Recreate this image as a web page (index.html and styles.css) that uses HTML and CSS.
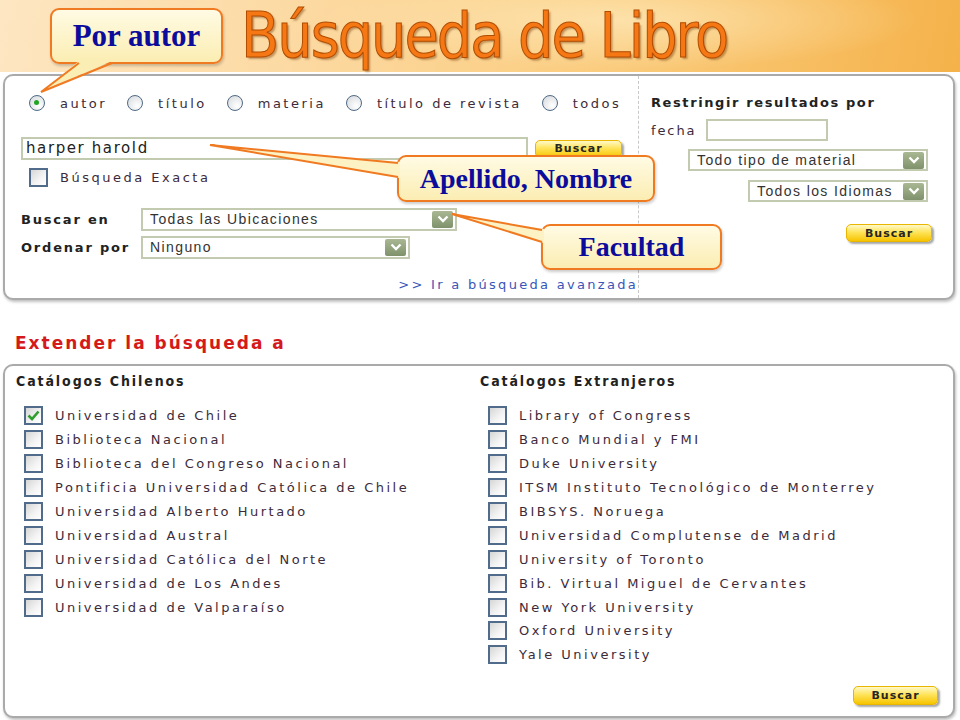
FILE: index.html
```html
<!DOCTYPE html>
<html>
<head>
  <title>Búsqueda de Libro</title>
  <link rel="stylesheet" href="styles.css">
</head>
<body>
  <header class="banner">
    <h1 class="title">Búsqueda de Libro</h1>
  </header>

  <main class="page">
    <section class="panel search-panel">
      <div class="search-main">
        <div class="radio-row">
          <label class="radio-item"><span class="radio checked"></span>autor</label>
          <label class="radio-item"><span class="radio"></span>título</label>
          <label class="radio-item"><span class="radio"></span>materia</label>
          <label class="radio-item"><span class="radio"></span>título de revista</label>
          <label class="radio-item"><span class="radio"></span>todos</label>
        </div>

        <div class="search-row">
          <div class="text-input wide">harper harold</div>
          <button class="button">Buscar</button>
        </div>

        <label class="check-item exact"><span class="check"></span>Búsqueda Exacta</label>

        <div class="options">
          <span class="option-label">Buscar en</span>
          <div class="select" style="width: 316px;"><span>Todas las Ubicaciones</span><span class="arrow"><svg width="12" height="8" viewBox="0 0 12 8"><path d="M1.5 1.5 L6 6 L10.5 1.5" fill="none" stroke="#fff" stroke-width="2.4"/></svg></span></div>
          <span class="option-label">Ordenar por</span>
          <div class="select" style="width: 269px;"><span>Ninguno</span><span class="arrow"><svg width="12" height="8" viewBox="0 0 12 8"><path d="M1.5 1.5 L6 6 L10.5 1.5" fill="none" stroke="#fff" stroke-width="2.4"/></svg></span></div>
        </div>

        <div class="advanced"><a href="#">&gt;&gt; Ir a búsqueda avanzada</a></div>
      </div>

      <div class="search-side">
        <h3 class="side-title">Restringir resultados por</h3>
        <div class="date-row">
          <span>fecha</span>
          <div class="text-input date"></div>
        </div>
        <div class="side-selects">
          <div class="select" style="width: 240px;"><span>Todo tipo de material</span><span class="arrow"><svg width="12" height="8" viewBox="0 0 12 8"><path d="M1.5 1.5 L6 6 L10.5 1.5" fill="none" stroke="#fff" stroke-width="2.4"/></svg></span></div>
          <div class="select" style="width: 180px;"><span>Todos los Idiomas</span><span class="arrow"><svg width="12" height="8" viewBox="0 0 12 8"><path d="M1.5 1.5 L6 6 L10.5 1.5" fill="none" stroke="#fff" stroke-width="2.4"/></svg></span></div>
          <button class="button side-button">Buscar</button>
        </div>
      </div>
    </section>

    <h2 class="extend-title">Extender la búsqueda a</h2>

    <section class="panel catalog-panel">
      <div class="catalog-cols">
        <div class="catalog">
          <h4 class="catalog-title">Catálogos Chilenos</h4>
          <label class="check-item"><span class="check"><svg width="13" height="11" viewBox="0 0 13 11"><path d="M1.5 5.5 L5 9 L11.5 1.5" fill="none" stroke="#2f9e2f" stroke-width="2.6"/></svg></span>Universidad de Chile</label>
          <label class="check-item"><span class="check"></span>Biblioteca Nacional</label>
          <label class="check-item"><span class="check"></span>Biblioteca del Congreso Nacional</label>
          <label class="check-item"><span class="check"></span>Pontificia Universidad Católica de Chile</label>
          <label class="check-item"><span class="check"></span>Universidad Alberto Hurtado</label>
          <label class="check-item"><span class="check"></span>Universidad Austral</label>
          <label class="check-item"><span class="check"></span>Universidad Católica del Norte</label>
          <label class="check-item"><span class="check"></span>Universidad de Los Andes</label>
          <label class="check-item"><span class="check"></span>Universidad de Valparaíso</label>
        </div>
        <div class="catalog">
          <h4 class="catalog-title">Catálogos Extranjeros</h4>
          <label class="check-item"><span class="check"></span>Library of Congress</label>
          <label class="check-item"><span class="check"></span>Banco Mundial y FMI</label>
          <label class="check-item"><span class="check"></span>Duke University</label>
          <label class="check-item"><span class="check"></span>ITSM Instituto Tecnológico de Monterrey</label>
          <label class="check-item"><span class="check"></span>BIBSYS. Noruega</label>
          <label class="check-item"><span class="check"></span>Universidad Complutense de Madrid</label>
          <label class="check-item"><span class="check"></span>University of Toronto</label>
          <label class="check-item"><span class="check"></span>Bib. Virtual Miguel de Cervantes</label>
          <label class="check-item"><span class="check"></span>New York University</label>
          <label class="check-item"><span class="check"></span>Oxford University</label>
          <label class="check-item"><span class="check"></span>Yale University</label>
        </div>
      </div>
      <div class="catalog-foot">
        <button class="button">Buscar</button>
      </div>
    </section>
  </main>

  <!-- callouts drawn over the screenshot -->
  <div class="callout callout-autor">Por autor</div>
  <div class="callout callout-name">Apellido, Nombre</div>
  <div class="callout callout-faculty">Facultad</div>

  <svg class="tails" width="960" height="720" viewBox="0 0 960 720">
    <polygon points="79,61 41,92 112,61" fill="#fbeeb4"/>
    <polyline points="79,63 41,92 112,63" fill="none" stroke="#f07a22" stroke-width="2"/>
    <polygon points="400,162 210,145 400,178" fill="#fcf2c4"/>
    <polyline points="398,163 210,145 398,177" fill="none" stroke="#f07a22" stroke-width="2"/>
    <polygon points="544,229 452,214 544,243" fill="#fcf2c4"/>
    <polyline points="542,230 452,214 542,242" fill="none" stroke="#f07a22" stroke-width="2"/>
  </svg>
</body>
</html>
```

FILE: styles.css
```css
* {
  box-sizing: border-box;
}
body {
  margin: 0;
  width: 960px;
  height: 720px;
  position: relative;
  overflow: hidden;
  background: #fff;
  font-family: "DejaVu Sans", Verdana, sans-serif;
  font-size: 13px;
  color: #3d2b3a;
}

/* orange slide header */
.banner {
  height: 72px;
  padding-left: 241px;
  background:
    radial-gradient(ellipse 300px 50px at 620px 20px, rgba(255,240,200,.6), rgba(255,240,200,0)),
    linear-gradient(100deg, #fde6c2 0%, #fcd89e 35%, #facb7c 65%, #f5b24a 100%);
}
.title {
  display: inline-block;
  margin: 0;
  padding-right: 4px;
  font-family: "Liberation Sans Narrow", "DejaVu Sans Condensed", "Liberation Sans", sans-serif;
  font-size: 62px;
  font-weight: normal;
  line-height: 72px;
  letter-spacing: -2px;
  color: #f67814;
  -webkit-text-stroke: 1px #b24c00;
  text-shadow: 2px 2px 2px rgba(120,60,10,.45);
}

.page {
  padding: 2px 5px 0 3px;
}
.panel {
  background: #fff;
  border: 2px solid #aaa;
  border-radius: 10px;
  box-shadow: 1px 2px 3px rgba(0,0,0,.25);
}

/* top search panel */
.search-panel {
  display: flex;
  height: 226px;
}
.search-main {
  width: 633px;
  padding: 19px 0 0 16px;
}
.radio-row {
  display: flex;
  align-items: center;
  gap: 20px;
  margin-left: 8px;
  height: 16px;
}
.radio-item {
  display: flex;
  align-items: center;
  gap: 15px;
  letter-spacing: 2.5px;
}
.radio {
  position: relative;
  width: 16px;
  height: 16px;
  border-radius: 50%;
  border: 1.5px solid #4f6984;
  background: radial-gradient(circle at 65% 70%, #fff, #d3d7db);
}
.radio.checked::after {
  content: "";
  position: absolute;
  left: 4px;
  top: 4px;
  width: 5px;
  height: 5px;
  border-radius: 50%;
  background: #22a524;
}

.search-row {
  display: flex;
  align-items: center;
  gap: 7px;
  margin-top: 26px;
}
.text-input {
  height: 23px;
  border: 2px solid #c2caaf;
  background: #fff;
}
.text-input.wide {
  width: 507px;
  padding-left: 3px;
  font-size: 15px;
  line-height: 19px;
  letter-spacing: 1.6px;
  color: #222;
}
.text-input.date {
  width: 122px;
  height: 22px;
}

.button {
  width: 87px;
  height: 18px;
  padding: 0;
  border: 1px solid #e8b600;
  border-radius: 5px;
  background: linear-gradient(#fff9c8, #ffe45a 45%, #f6c400);
  box-shadow: 2px 2px 2px rgba(0,0,0,.35);
  font-family: "DejaVu Sans", Verdana, sans-serif;
  font-size: 11px;
  font-weight: bold;
  letter-spacing: 1px;
  color: #262626;
  cursor: pointer;
}

.check-item {
  display: flex;
  align-items: center;
  gap: 12px;
  height: 23.9px;
  letter-spacing: 2.5px;
}
.check {
  display: flex;
  align-items: center;
  justify-content: center;
  width: 19px;
  height: 19px;
  flex: none;
  border: 2px solid #516c8a;
  background: linear-gradient(135deg, #d6d6d6, #f4f4f4 60%, #fff);
}
.exact {
  margin: 6px 0 0 8px;
}

.options {
  display: grid;
  grid-template-columns: 120px auto;
  grid-auto-rows: 23px;
  row-gap: 5px;
  align-items: center;
  margin-top: 18px;
}
.option-label {
  font-weight: bold;
  letter-spacing: 1.8px;
  color: #222;
}
.select {
  display: flex;
  align-items: center;
  justify-content: space-between;
  height: 23px;
  padding: 0 2px 0 7px;
  border: 2px solid #c2caaf;
  background: #fff;
  font-family: "Liberation Sans", Arial, sans-serif;
  font-size: 14px;
  letter-spacing: 1.4px;
  color: #333;
}
.arrow {
  display: flex;
  align-items: center;
  justify-content: center;
  width: 21px;
  height: 17px;
  border-radius: 2px;
  background: linear-gradient(#a9b893, #7f926b);
}

.advanced {
  margin-top: 18px;
  text-align: right;
}
.advanced a {
  color: #3956b8;
  text-decoration: none;
  letter-spacing: 2.3px;
}

.search-side {
  flex: 1;
  padding: 19px 25px 0 12px;
  border-left: 1px dashed #c8c8c8;
}
.side-title {
  margin: 0;
  height: 16px;
  font-size: 13px;
  line-height: 16px;
  letter-spacing: 1.6px;
  color: #222;
}
.date-row {
  display: flex;
  align-items: center;
  gap: 10px;
  margin-top: 8px;
  letter-spacing: 1.9px;
}
.side-selects {
  display: flex;
  flex-direction: column;
  align-items: flex-end;
  gap: 9px;
  margin-top: 8px;
}
.side-selects .select {
  height: 22px;
}
.side-button {
  width: 86px;
  margin: 13px -4px 0 0;
}

/* catalogs */
.extend-title {
  margin: 33px 0 11px 12px;
  font-family: "DejaVu Sans", Verdana, sans-serif;
  font-size: 17px;
  line-height: 20px;
  letter-spacing: 2px;
  color: #d41a1a;
}
.catalog-panel {
  display: flex;
  flex-direction: column;
  height: 354px;
}
.catalog-cols {
  display: grid;
  grid-template-columns: 464px 1fr;
  padding: 7px 0 0 11px;
}
.catalog-title {
  margin: 0 0 15px;
  font-family: "DejaVu Sans Condensed", "DejaVu Sans", sans-serif;
  font-size: 14px;
  line-height: 16px;
  letter-spacing: 1.9px;
  color: #222;
}
.catalog .check {
  margin-left: 8px;
}
.catalog-foot {
  display: flex;
  justify-content: flex-end;
  margin-top: auto;
  padding: 0 15px 11px 0;
}
.catalog-foot .button {
  width: 85px;
  height: 19px;
}

/* yellow callouts */
.callout {
  position: absolute;
  display: flex;
  align-items: center;
  justify-content: center;
  border: 2px solid #f07a22;
  border-radius: 9px;
  background: linear-gradient(#fffbe4, #fbedb2);
  box-shadow: 1px 2px 3px rgba(0,0,0,.2);
  font-family: "Liberation Serif", "Times New Roman", serif;
  font-weight: bold;
  color: #0c0c9c;
}
.callout-autor {
  left: 50px;
  top: 8px;
  width: 173px;
  height: 56px;
  font-size: 31px;
}
.callout-name {
  left: 397px;
  top: 155px;
  width: 258px;
  height: 47px;
  font-size: 28px;
}
.callout-faculty {
  left: 541px;
  top: 224px;
  width: 181px;
  height: 46px;
  font-size: 28px;
}
.tails {
  position: absolute;
  left: 0;
  top: 0;
  pointer-events: none;
}
```
